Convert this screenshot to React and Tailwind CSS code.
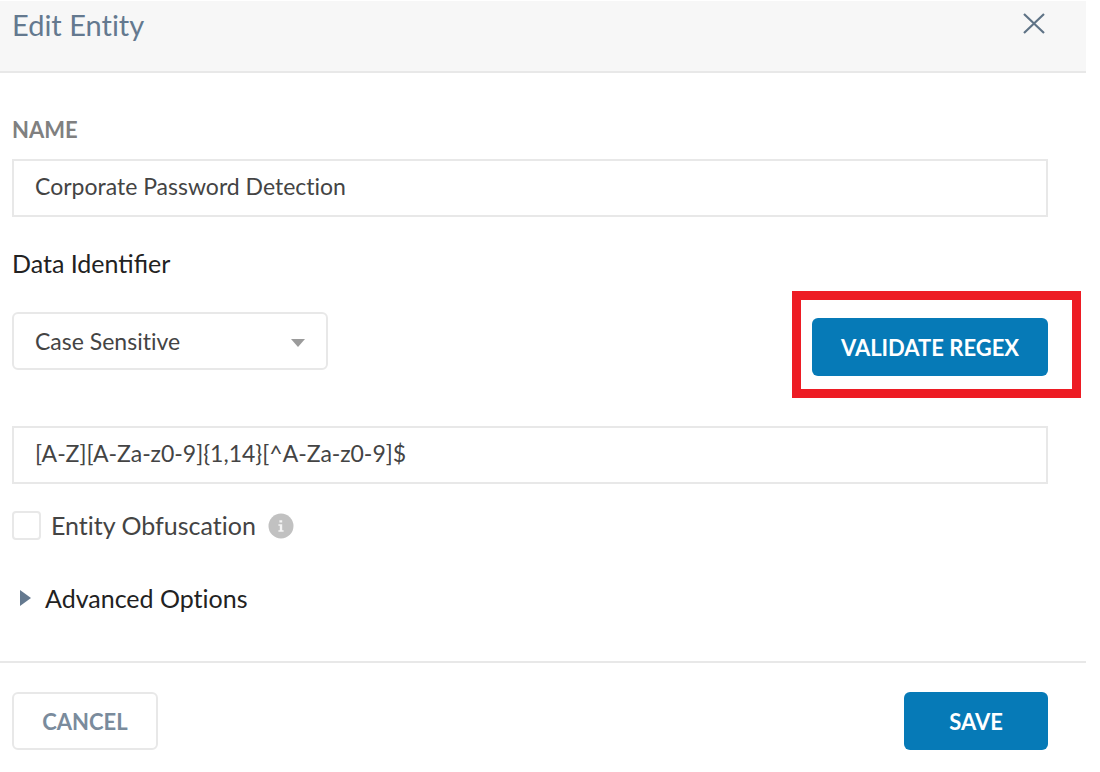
import { useState } from "react";

function InfoIcon() {
  return (
    <svg viewBox="0 0 26 26" className="mt-0.5 h-[26px] w-[26px] shrink-0" aria-hidden="true">
      <circle cx="13" cy="13" r="12.5" fill="#c1c1c1" />
      <path d="M11.4 7.2h2.8v2.4h-2.8zM10.4 11.2h3.8v6h1.4v1.6h-5.2v-1.6h1.4v-4.4h-1.4z" fill="#f4f4f4" />
    </svg>
  );
}

export default function App() {
  const [name, setName] = useState("Corporate Password Detection");
  const [regex, setRegex] = useState("[A-Z][A-Za-z0-9]{1,14}[^A-Za-z0-9]$");
  const [open, setOpen] = useState(false);

  return (
    <div className="bg-white pt-px pr-3.5 font-['Lato',sans-serif] text-[25px] text-[#444] [font-variant-ligatures:none]">
      <header className="flex items-start justify-between border-b-2 border-[#e8e8e8] bg-[#f7f7f7] pt-1 pr-10 pb-[26px] pl-3">
        <h1 className="text-[29px] leading-10 text-[#64798f]">Edit Entity</h1>
        <button type="button" aria-label="Close" className="mt-1.5 flex">
          <svg viewBox="0 0 24 24" className="h-6 w-6" fill="none" stroke="#5f7386" strokeWidth="2.2">
            <path d="M2 3 22 22M22 3 2 22" />
          </svg>
        </button>
      </header>

      <main className="pt-[41px] pr-[38px] pb-[43px] pl-3">
        <label htmlFor="name" className="block text-[22px] leading-8 font-bold text-[#808080]">
          NAME
        </label>
        <input
          id="name"
          value={name}
          onChange={(e) => setName(e.target.value)}
          className="mt-[13px] block h-[58px] w-full border-2 border-[#e8e8e8] px-[21px] pb-1 text-[23px] outline-none"
        />

        <h2 className="mt-[30px] leading-8 text-[#222] [font-variant-ligatures:normal]">Data Identifier</h2>

        <div className="mt-[33px] flex items-start justify-between">
          <div className="relative w-[316px]">
            <select
              aria-label="Case sensitivity"
              className="block h-[58px] w-full appearance-none rounded-md border-2 border-[#e8e8e8] bg-white px-[21px] text-[23px] outline-none"
            >
              <option>Case Sensitive</option>
              <option>Case Insensitive</option>
            </select>
            <svg viewBox="0 0 14 8" className="pointer-events-none absolute top-[27px] right-[23px] h-2 w-3.5" aria-hidden="true">
              <path d="M0 0H14L7 8Z" fill="#9b9b9b" />
            </svg>
          </div>
          <div className="relative mt-1.5">
            <button type="button" className="h-[58px] w-[236px] rounded-md bg-[#067ab7] text-[22px] font-bold text-white">
              VALIDATE REGEX
            </button>
            <div className="pointer-events-none absolute -top-[27px] -right-[33px] -bottom-[22px] -left-5 border-9 border-[#ed1c24]" />
          </div>
        </div>

        <input
          aria-label="Regular expression"
          value={regex}
          onChange={(e) => setRegex(e.target.value)}
          className="mt-[50px] block h-[58px] w-full border-2 border-[#e8e8e8] px-[21px] pb-1 text-[23px] outline-none"
        />

        <div className="mt-[21px] flex items-center gap-3">
          <label className="flex items-center gap-2.5 leading-10">
            <input type="checkbox" className="h-[29px] w-[29px] appearance-none rounded-sm border-2 border-[#e8e8e8] bg-white checked:bg-[#067ab7]" />
            <span>Entity Obfuscation</span>
          </label>
          <InfoIcon />
        </div>

        <button
          type="button"
          aria-expanded={open}
          onClick={() => setOpen(!open)}
          className="mt-[33px] flex items-center gap-3.5 pl-2 leading-10 text-[#222]"
        >
          <svg viewBox="0 0 11 16" className="h-4 w-[11px]" aria-hidden="true">
            <path d="M0 0 11 8 0 16Z" fill="#64798f" />
          </svg>
          Advanced Options
        </button>
      </main>

      <footer className="flex items-center justify-between border-t-2 border-[#e8e8e8] pt-[29px] pr-[38px] pb-[22px] pl-3 text-[22px] font-bold">
        <button type="button" className="h-[58px] w-[146px] rounded-md border-2 border-[#e8e8e8] bg-white text-[#7a8b9c]">
          CANCEL
        </button>
        <button type="button" className="h-[58px] w-36 rounded-md bg-[#067ab7] text-white">
          SAVE
        </button>
      </footer>
    </div>
  );
}
